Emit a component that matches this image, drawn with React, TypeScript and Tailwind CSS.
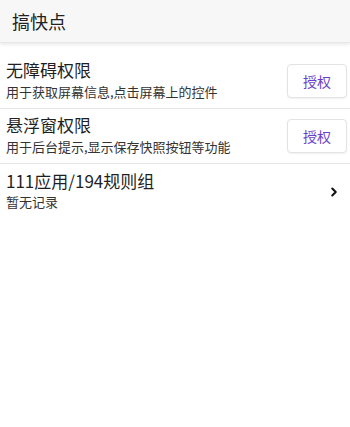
import { ChevronRight } from "lucide-react"

const font = { fontFamily: '"Noto Sans CJK SC", "Noto Sans", sans-serif' }

function PermRow({ title, desc }: { title: string; desc: string }) {
  return (
    <div className="flex items-center h-[55px] pl-[6px] pr-[3px] border-b border-[#e6e6e6]">
      <div className="flex-1 min-w-0 flex flex-col pb-[3px]">
        <span className="text-[17px] leading-[24px] text-[#1f1f1f]">{title}</span>
        <span className="text-[13px] leading-[18px] mt-[1px] text-[#333]">{desc}</span>
      </div>
      <button className="w-[60px] h-[34px] rounded-[4px] border border-[#e3e3e3] bg-white shadow-[0_1px_2px_rgba(0,0,0,0.06)] text-[14px] text-[#6a3fc9]">
        授权
      </button>
    </div>
  )
}

export default function App() {
  return (
    <div className="w-[350px] h-[427px] bg-white overflow-hidden" style={font}>
      {/* Top bar */}
      <div className="h-[43px] bg-[#f7f7f7] flex items-center px-[12px] shadow-[0_2px_3px_rgba(0,0,0,0.08)] border-b border-[#e8e8e8]">
        <span className="text-[18px] text-[#222]">搞快点</span>
      </div>

      <div className="mt-[11px]">
        <PermRow title="无障碍权限" desc="用于获取屏幕信息,点击屏幕上的控件" />
        <PermRow title="悬浮窗权限" desc="用于后台提示,显示保存快照按钮等功能" />

        <div className="flex items-center h-[55px] pl-[6px] pr-[9px]">
          <div className="flex-1 min-w-0 flex flex-col pb-[3px]">
            <span className="text-[17px] leading-[24px] text-[#1f1f1f]">111应用/194规则组</span>
            <span className="text-[13px] leading-[18px] text-[#333]">暂无记录</span>
          </div>
          <ChevronRight className="w-[14px] h-[14px] text-[#111]" strokeWidth={3.5} />
        </div>
      </div>
    </div>
  )
}
